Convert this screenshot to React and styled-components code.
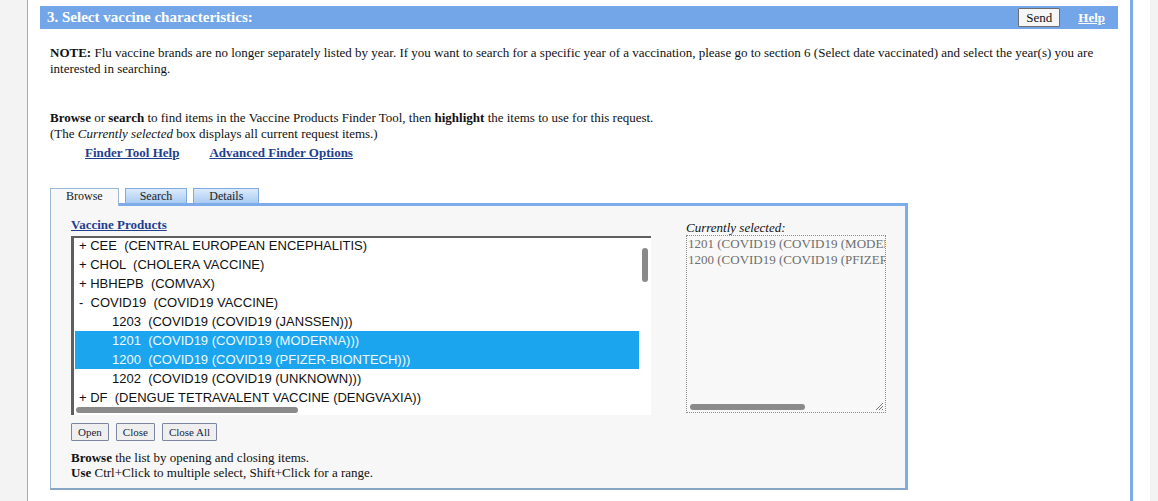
import React from 'react';
import styled, { createGlobalStyle } from 'styled-components';

const GlobalStyle = createGlobalStyle`
  html, body {
    margin: 0;
    padding: 0;
    background: #f3f3f3;
  }
  body {
    font-family: "Liberation Serif", "Times New Roman", serif;
    font-size: 13px;
    color: #111;
  }
`;

const Page = styled.div`
  margin-left: 27px;
  width: 1123px;
  min-height: 100vh;
  background: #fff;
  border-left: 1px solid #8eafcf;
  box-sizing: border-box;
`;

const Section = styled.div`
  width: 1105px;
  min-height: 100vh;
  box-sizing: border-box;
  border-right: 3px solid #7eacea;
  padding: 6px 12px 0 12px;
`;

const HeaderBar = styled.div`
  height: 23px;
  background: #73a6e8;
  display: flex;
  align-items: center;
  padding: 0 13px 0 7px;
`;

const HeaderTitle = styled.h2`
  margin: 0;
  flex: 1;
  color: #fff;
  font-size: 15px;
  font-weight: bold;
`;

const SendButton = styled.button`
  font-family: "Liberation Serif", serif;
  font-size: 13px;
  height: 19px;
  width: 42px;
  padding: 0;
  background: #f6f6f6;
  color: #111;
  border: 1px solid #6d6d6d;
  border-radius: 1px;
  margin-right: 18px;
`;

const HeaderLink = styled.a`
  color: #fff;
  font-weight: bold;
  font-size: 13px;
  text-decoration: underline;
`;

const Content = styled.div`
  padding: 16px 10px 0 10px;
`;

const Para = styled.p`
  margin: ${p => p.$top || 0}px 0 0 0;
  line-height: 16px;
  font-size: 13px;
`;

const LinkRow = styled.div`
  display: flex;
  gap: 30px;
  margin-top: 3px;
  padding-left: 35px;
  line-height: 16px;
`;

const BlueLink = styled.a`
  color: #1f3f8f;
  font-weight: bold;
  font-size: 13px;
  text-decoration: underline;
`;

const Tabs = styled.div`
  display: flex;
  align-items: flex-start;
  gap: 6px;
  margin-top: 27px;
  margin-bottom: -3px;
  position: relative;
  z-index: 1;
`;

const Tab = styled.div`
  box-sizing: border-box;
  height: ${p => (p.$active ? 18 : 15)}px;
  padding: 0 ${p => p.$pad}px;
  font-size: 12px;
  line-height: 15px;
  color: #222;
  border: 1px solid ${p => (p.$active ? '#9db8d4' : '#7eaae0')};
  border-bottom: none;
  background: ${p => (p.$active ? '#f7f7f7' : 'linear-gradient(#dcebfb, #a9cbf2)')};
`;

const Panel = styled.div`
  width: 858px;
  box-sizing: border-box;
  background: #f7f7f7;
  border-top: 3px solid #7eacea;
  border-right: 3px solid #7eacea;
  border-left: 1px solid #9db8d4;
  border-bottom: 2px solid #86a6c6;
  padding: 11px 19px 8px 20px;
`;

const Columns = styled.div`
  display: flex;
  gap: 35px;
`;

const LeftCol = styled.div`
  width: 580px;
`;

const RightCol = styled.div`
  width: 200px;
  padding-top: 3px;
`;

const ListTitle = styled(BlueLink)`
  display: block;
  line-height: 16px;
  margin-bottom: 3px;
`;

const ListBox = styled.div`
  position: relative;
  height: 179px;
  background: #fff;
  box-shadow: inset 3px 2px 0 #5f5f5f;
  padding-left: 4px;
  padding-right: 12px;
  overflow: hidden;
`;

const Row = styled.div`
  height: 19px;
  line-height: 19px;
  white-space: pre;
  font-family: "Liberation Sans", Arial, sans-serif;
  font-size: 13px;
  padding-left: ${p => (p.$child ? 37 : 4)}px;
  background: ${p => (p.$selected ? '#1ba5ef' : 'transparent')};
  color: ${p => (p.$selected ? '#eef8ff' : '#111')};
`;

const Thumb = styled.div`
  position: absolute;
  background: #8a8a8a;
  border-radius: 4px;
`;

const ButtonRow = styled.div`
  display: flex;
  gap: 7px;
  margin-top: 8px;
`;

const SmallButton = styled.button`
  font-family: "Liberation Serif", serif;
  font-size: 11px;
  height: 18px;
  padding: 0 6px;
  color: #1d2440;
  background: #efefef;
  border: 1px solid #7c86a0;
  border-radius: 1px;
`;

const HelpText = styled.div`
  margin-top: 9px;
  line-height: 15px;
  font-size: 13px;
`;

const SelectedLabel = styled.div`
  font-style: italic;
  line-height: 15px;
`;

const SelectedBox = styled.div`
  position: relative;
  height: 178px;
  box-sizing: border-box;
  border: 1px dotted #8c8c8c;
  background: #f8f8f8;
  padding: 0 0 0 1px;
  overflow: hidden;
`;

const SelectedLine = styled.div`
  white-space: pre;
  color: #6e6e6e;
  line-height: 16px;
  font-size: 13px;
`;

const Grip = styled.svg`
  position: absolute;
  right: 1px;
  bottom: 1px;
`;

const rows = [
  { text: '+ CEE  (CENTRAL EUROPEAN ENCEPHALITIS)' },
  { text: '+ CHOL  (CHOLERA VACCINE)' },
  { text: '+ HBHEPB  (COMVAX)' },
  { text: '-  COVID19  (COVID19 VACCINE)' },
  { text: '1203  (COVID19 (COVID19 (JANSSEN)))', child: true },
  { text: '1201  (COVID19 (COVID19 (MODERNA)))', child: true, selected: true },
  { text: '1200  (COVID19 (COVID19 (PFIZER-BIONTECH)))', child: true, selected: true },
  { text: '1202  (COVID19 (COVID19 (UNKNOWN)))', child: true },
  { text: '+ DF  (DENGUE TETRAVALENT VACCINE (DENGVAXIA))' },
];

const tabs = [
  { label: 'Browse', pad: 15, active: true },
  { label: 'Search', pad: 14 },
  { label: 'Details', pad: 15 },
];

export default function App() {
  return (
    <>
      <GlobalStyle />
      <Page>
        <Section>
          <HeaderBar>
            <HeaderTitle>3. Select vaccine characteristics:</HeaderTitle>
            <SendButton>Send</SendButton>
            <HeaderLink href="#">Help</HeaderLink>
          </HeaderBar>
          <Content>
            <Para>
              <b>NOTE:</b> Flu vaccine brands are no longer separately listed by year. If you want to search for a
              specific year of a vaccination, please go to section 6 (Select date vaccinated) and select the year(s)
              you are interested in searching.
            </Para>
            <Para $top={33}>
              <b>Browse</b> or <b>search</b> to find items in the Vaccine Products Finder Tool, then{' '}
              <b>highlight</b> the items to use for this request.
            </Para>
            <Para>
              (The <i>Currently selected</i> box displays all current request items.)
            </Para>
            <LinkRow>
              <BlueLink href="#">Finder Tool Help</BlueLink>
              <BlueLink href="#">Advanced Finder Options</BlueLink>
            </LinkRow>

            <Tabs>
              {tabs.map(t => (
                <Tab key={t.label} $active={t.active} $pad={t.pad}>
                  {t.label}
                </Tab>
              ))}
            </Tabs>
            <Panel>
              <Columns>
                <LeftCol>
                  <ListTitle href="#">Vaccine Products</ListTitle>
                  <ListBox>
                    {rows.map(r => (
                      <Row key={r.text} $child={r.child} $selected={r.selected}>
                        {r.text}
                      </Row>
                    ))}
                    <Thumb style={{ right: 3, top: 12, width: 6, height: 34 }} />
                    <Thumb style={{ left: 5, bottom: 2, width: 222, height: 6 }} />
                  </ListBox>
                  <ButtonRow>
                    <SmallButton>Open</SmallButton>
                    <SmallButton>Close</SmallButton>
                    <SmallButton>Close All</SmallButton>
                  </ButtonRow>
                  <HelpText>
                    <b>Browse</b> the list by opening and closing items.
                    <br />
                    <b>Use</b> Ctrl+Click to multiple select, Shift+Click for a range.
                  </HelpText>
                </LeftCol>
                <RightCol>
                  <SelectedLabel>Currently selected:</SelectedLabel>
                  <SelectedBox>
                    <SelectedLine>1201 (COVID19 (COVID19 (MODERNA)))</SelectedLine>
                    <SelectedLine>1200 (COVID19 (COVID19 (PFIZER-BIONTECH)))</SelectedLine>
                    <Thumb style={{ left: 3, bottom: 2, width: 115, height: 6 }} />
                    <Grip width="10" height="10" viewBox="0 0 10 10">
                      <path d="M9 2 L2 9 M9 5 L5 9 M9 8 L8 9" stroke="#777" strokeWidth="1" />
                    </Grip>
                  </SelectedBox>
                </RightCol>
              </Columns>
            </Panel>
          </Content>
        </Section>
      </Page>
    </>
  );
}
